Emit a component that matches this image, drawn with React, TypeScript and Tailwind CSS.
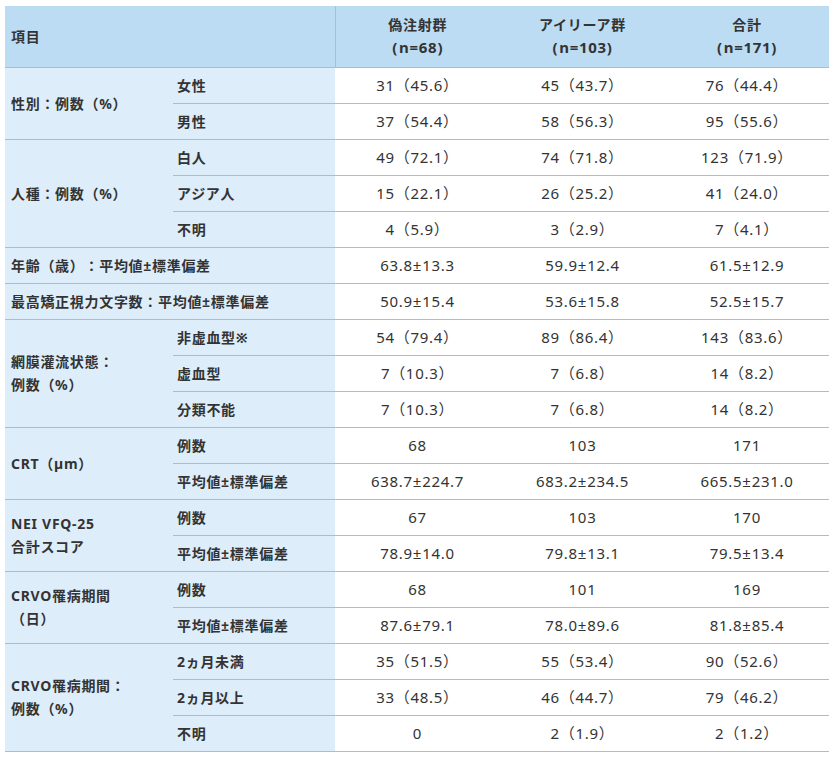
import React from "react";

type Sub = { label: string; values: string[] };
type Group = { label: string[]; subs?: Sub[]; values?: string[] };

const groups: Group[] = [
  {
    label: ["性別：例数（%）"],
    subs: [
      { label: "女性", values: ["31（45.6）", "45（43.7）", "76（44.4）"] },
      { label: "男性", values: ["37（54.4）", "58（56.3）", "95（55.6）"] },
    ],
  },
  {
    label: ["人種：例数（%）"],
    subs: [
      { label: "白人", values: ["49（72.1）", "74（71.8）", "123（71.9）"] },
      { label: "アジア人", values: ["15（22.1）", "26（25.2）", "41（24.0）"] },
      { label: "不明", values: ["4（5.9）", "3（2.9）", "7（4.1）"] },
    ],
  },
  {
    label: ["年齢（歳）：平均値±標準偏差"],
    values: ["63.8±13.3", "59.9±12.4", "61.5±12.9"],
  },
  {
    label: ["最高矯正視力文字数：平均値±標準偏差"],
    values: ["50.9±15.4", "53.6±15.8", "52.5±15.7"],
  },
  {
    label: ["網膜灌流状態：", "例数（%）"],
    subs: [
      { label: "非虚血型※", values: ["54（79.4）", "89（86.4）", "143（83.6）"] },
      { label: "虚血型", values: ["7（10.3）", "7（6.8）", "14（8.2）"] },
      { label: "分類不能", values: ["7（10.3）", "7（6.8）", "14（8.2）"] },
    ],
  },
  {
    label: ["CRT（µm）"],
    subs: [
      { label: "例数", values: ["68", "103", "171"] },
      { label: "平均値±標準偏差", values: ["638.7±224.7", "683.2±234.5", "665.5±231.0"] },
    ],
  },
  {
    label: ["NEI VFQ-25", "合計スコア"],
    subs: [
      { label: "例数", values: ["67", "103", "170"] },
      { label: "平均値±標準偏差", values: ["78.9±14.0", "79.8±13.1", "79.5±13.4"] },
    ],
  },
  {
    label: ["CRVO罹病期間", "（日）"],
    subs: [
      { label: "例数", values: ["68", "101", "169"] },
      { label: "平均値±標準偏差", values: ["87.6±79.1", "78.0±89.6", "81.8±85.4"] },
    ],
  },
  {
    label: ["CRVO罹病期間：", "例数（%）"],
    subs: [
      { label: "2ヵ月未満", values: ["35（51.5）", "55（53.4）", "90（52.6）"] },
      { label: "2ヵ月以上", values: ["33（48.5）", "46（44.7）", "79（46.2）"] },
      { label: "不明", values: ["0", "2（1.9）", "2（1.2）"] },
    ],
  },
];

const labelCell = "bg-[#deedfa] font-bold text-left align-middle border-b border-[#a9bfce]";
const dataCell = "bg-white text-center align-middle border-b border-[#a9bfce] p-0 text-[15px]";

const DataCells = ({ values }: { values: string[] }) => (
  <>
    {values.map((v, i) => (
      <td key={i} className={dataCell}>
        {v}
      </td>
    ))}
  </>
);

const App = () => {
  return (
    <div
      className="min-h-screen bg-white pl-[5px] pt-[6px] text-[14px] leading-[23px] tracking-[0.05em] text-[#333] [text-spacing-trim:space-all]"
      style={{ fontFamily: '"Noto Sans", "Noto Sans CJK JP", sans-serif' }}
    >
      <table className="table-fixed border-collapse w-[824px]">
        <colgroup>
          <col className="w-[168px]" />
          <col className="w-[162px]" />
          <col className="w-[165px]" />
          <col className="w-[165px]" />
          <col className="w-[164px]" />
        </colgroup>
        <thead>
          <tr className="h-[61px]">
            <th
              colSpan={2}
              className="bg-[#bcdcf3] font-bold text-left pl-[6px] align-middle border-b border-r border-[#a9bfce]"
            >
              項目
            </th>
            {[
              ["偽注射群", "n=68"],
              ["アイリーア群", "n=103"],
              ["合計", "n=171"],
            ].map(([a, b]) => (
              <th key={a} className="bg-[#bcdcf3] font-bold text-center align-middle border-b border-[#a9bfce]">
                <div>{a}</div>
                <div className="flex justify-center text-[15px]">
                  <span className="pl-[5px] pr-[1px]">(</span>
                  <span>{b}</span>
                  <span className="pl-0 pr-[5px]">)</span>
                </div>
              </th>
            ))}
          </tr>
        </thead>
        <tbody>
          {groups.map((g, gi) =>
            g.subs ? (
              g.subs.map((s, si) => (
                <tr key={`${gi}-${si}`} className="h-[36px]">
                  {si === 0 && (
                    <td rowSpan={g.subs!.length} className={`${labelCell} pl-[6px]`}>
                      {g.label.map((l, li) => (
                        <div key={li}>{l}</div>
                      ))}
                    </td>
                  )}
                  <td className={`${labelCell} pl-[4px]`}>{s.label}</td>
                  <DataCells values={s.values} />
                </tr>
              ))
            ) : (
              <tr key={gi} className="h-[36px]">
                <td colSpan={2} className={`${labelCell} pl-[6px]`}>
                  {g.label[0]}
                </td>
                <DataCells values={g.values!} />
              </tr>
            )
          )}
        </tbody>
      </table>
    </div>
  );
};

export default App;
